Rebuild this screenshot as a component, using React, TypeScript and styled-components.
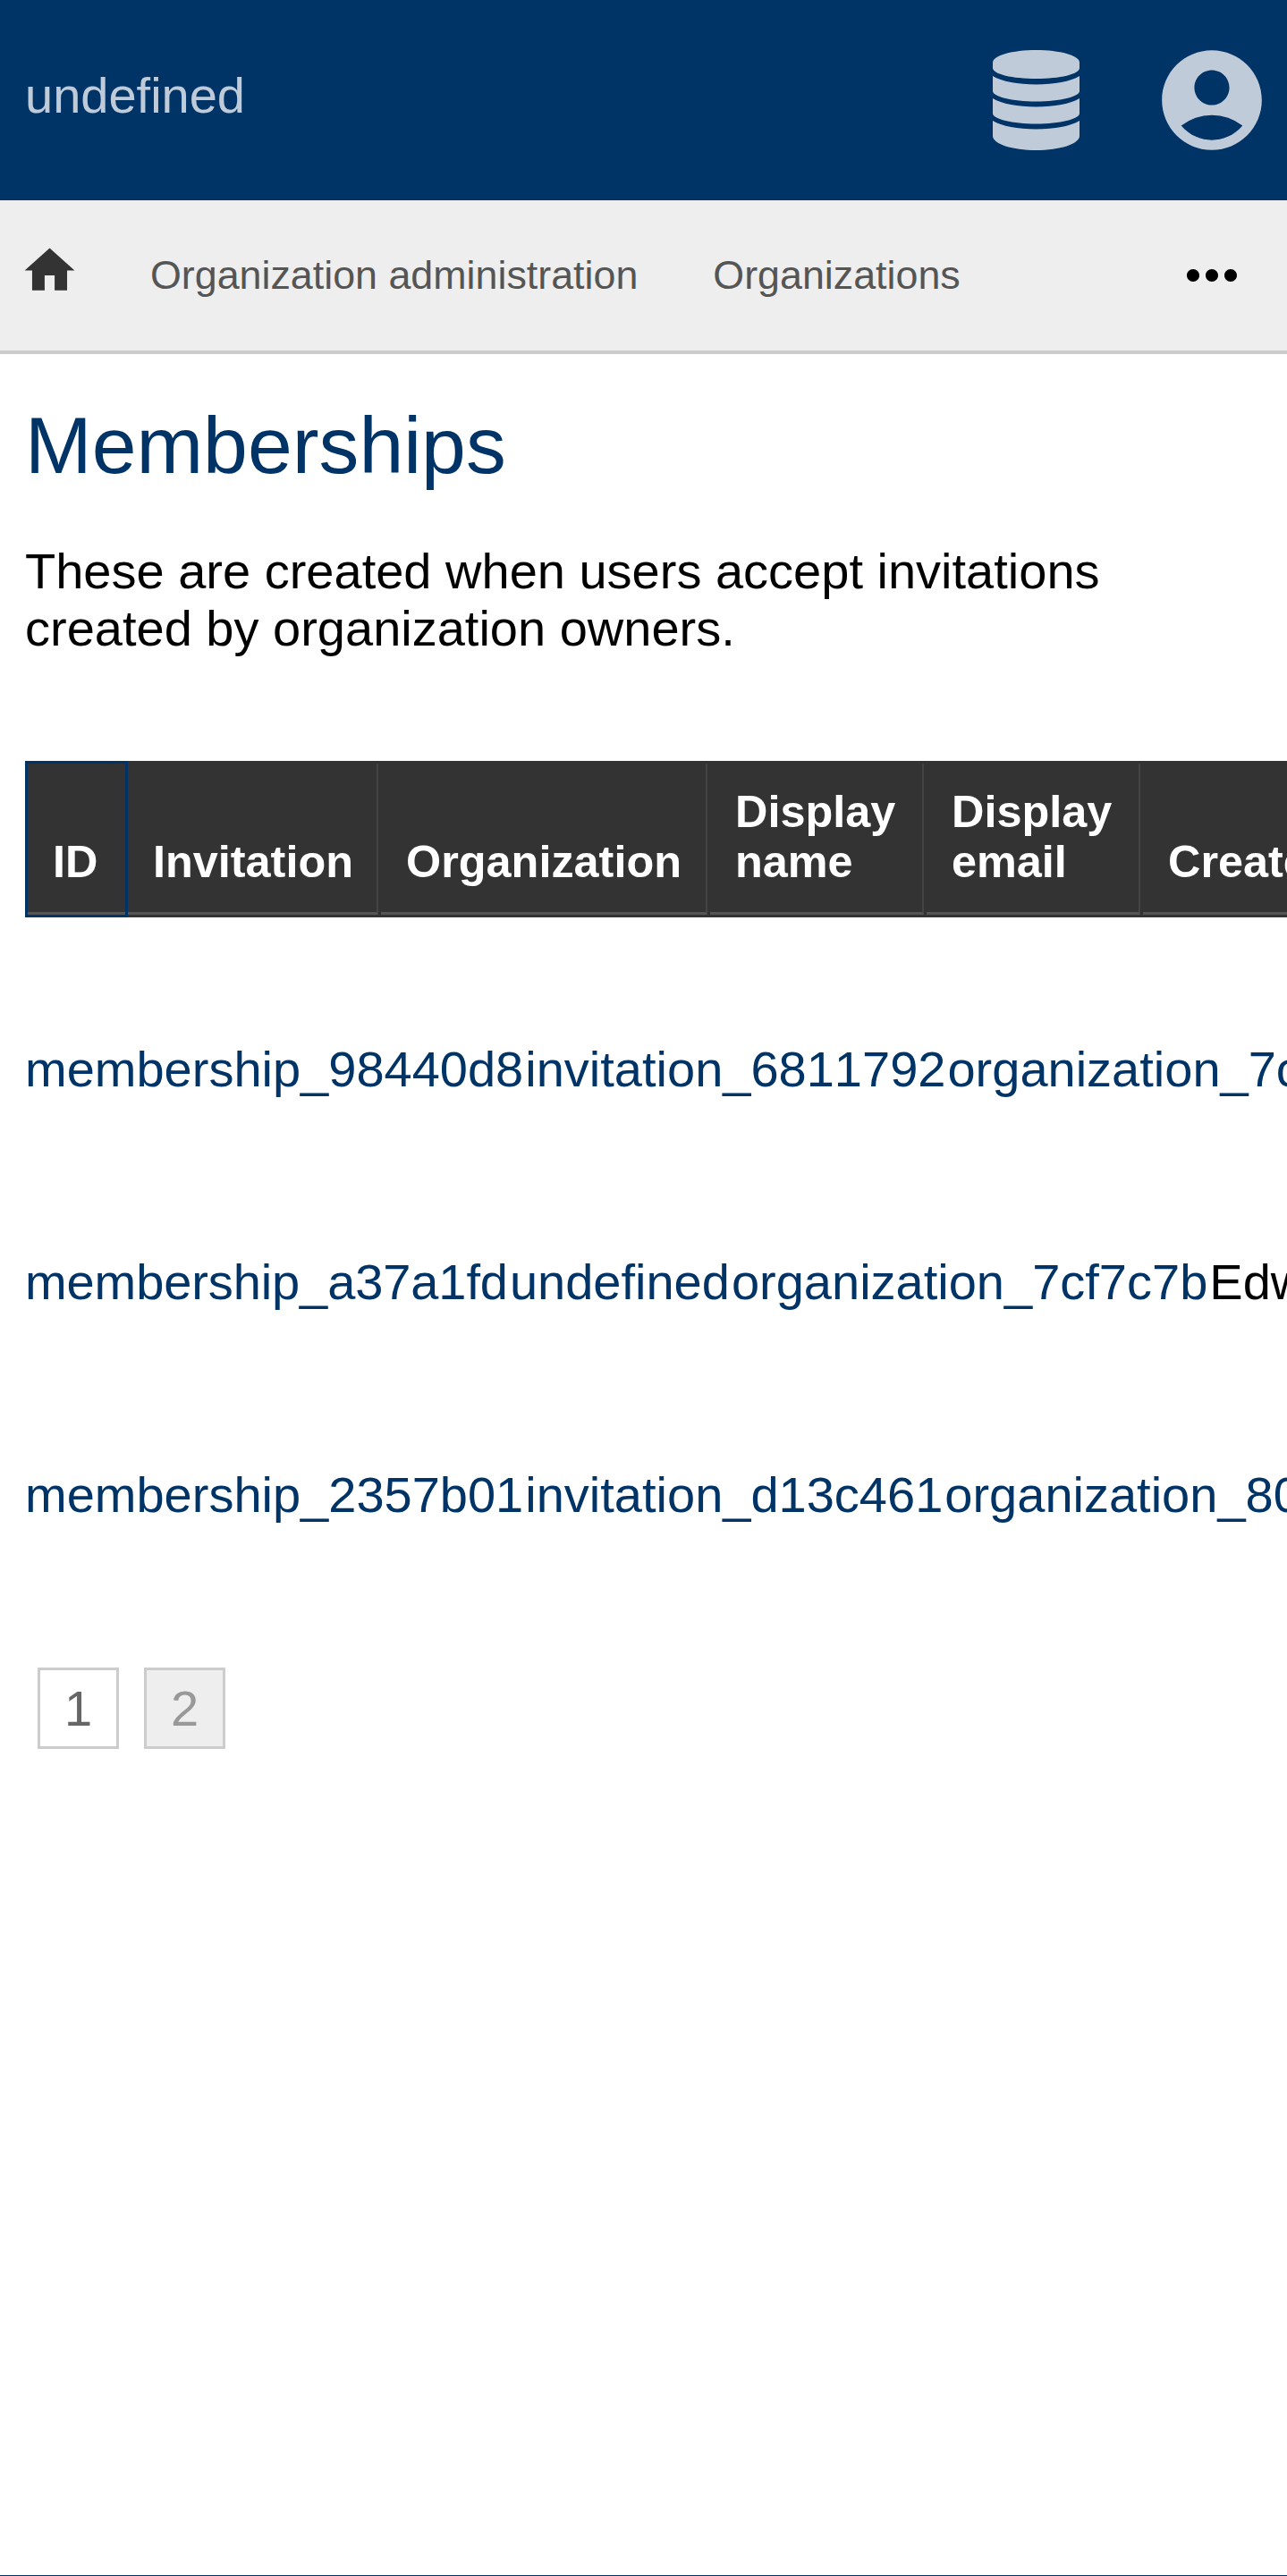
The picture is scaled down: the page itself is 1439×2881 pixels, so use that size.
import React, { FC } from 'react';
import styled, { createGlobalStyle } from 'styled-components';
import { MdAccountCircle, MdHome, MdMoreHoriz } from 'react-icons/md';

const GlobalStyle = createGlobalStyle`
    html, body {
        margin: 0;
        padding: 0;
        background: #fff;
        overflow: hidden;
    }
    body {
        font-family: "Liberation Sans", Arial, sans-serif;
        font-size: 56px;
        line-height: 64px;
        color: #000;
    }
`;

const Page = styled.div`
    width: 1439px;
    height: 2881px;
    display: flex;
    flex-direction: column;
    overflow: hidden;
`;

const Header = styled.header`
    height: 224px;
    flex: none;
    box-sizing: border-box;
    background: #003366;
    color: rgba(255, 255, 255, 0.75);
    display: flex;
    align-items: center;
    justify-content: space-between;
    padding: 0 28px;
`;

const Brand = styled.span`
    font-size: 56px;
    line-height: 64px;
    margin-bottom: 10px;
`;

const HeaderIcons = styled.div`
    display: flex;
    align-items: center;
    gap: 81px;
    margin-right: -11px;
`;

const DatabaseIcon = styled.svg`
    width: 97px;
    height: 112px;
    fill: currentColor;
`;

const Nav = styled.nav`
    height: 172px;
    flex: none;
    box-sizing: border-box;
    background: #eeeeee;
    border-bottom: 4px solid #cccccc;
    display: flex;
    align-items: center;
    padding: 0 42px 0 28px;
`;

const HomeLink = styled.a`
    display: flex;
    color: #333;
    margin: -11px 79px 0 -6px;
`;

const NavLink = styled.a`
    color: #555;
    font-size: 44.8px;
    margin: 0 84px 2px 0;
`;

const More = styled.a`
    display: flex;
    color: #000;
    margin-left: auto;
`;

const Main = styled.main`
    flex: 1;
    min-height: 0;
    padding: 0 0 0 28px;
`;

const Title = styled.h1`
    margin: 52px 0 59px;
    font-size: 89.6px;
    line-height: 100px;
    font-weight: normal;
    color: #003366;
`;

const Intro = styled.p`
    margin: 0 0 116px;
    width: 1260px;
`;

const HeadRow = styled.div`
    display: flex;
    width: max-content;
    gap: 3px;
    padding: 3px;
    background: #333;
    color: #fff;
    font-weight: bold;
    font-size: 50.4px;
    line-height: 56px;
`;

const HeadCell = styled.div<{ $focused?: boolean; $width: number }>`
    box-sizing: border-box;
    width: ${p => p.$width}px;
    height: 169px;
    display: flex;
    align-items: flex-end;
    padding: 0 14px 28px 28px;
    border-bottom: 3px solid #555;
    border-right: ${p => (p.$focused ? 'none' : '2px solid #444')};
    outline: ${p => (p.$focused ? '3px solid #003366' : 'none')};
`;

const Rows = styled.div`
    margin-top: 51px;
`;

const Row = styled.div`
    display: flex;
    width: max-content;
    gap: 2px;
    height: 238px;
    align-items: center;
    font-kerning: none;
`;

const RowLink = styled.a<{ $tight?: boolean }>`
    color: #003366;
    letter-spacing: ${p => (p.$tight ? '-0.1px' : 'normal')};
`;

const Pager = styled.div`
    display: flex;
    gap: 28px;
    margin: 74px 0 0 14px;
`;

const PageButton = styled.a<{ $current?: boolean }>`
    box-sizing: border-box;
    width: 91px;
    height: 91px;
    display: flex;
    align-items: center;
    justify-content: center;
    border: 3px solid #ccc;
    background: ${p => (p.$current ? '#eee' : '#fff')};
    color: ${p => (p.$current ? '#999' : '#666')};
`;

const Footer = styled.div`
    height: 1px;
    flex: none;
    background: #003366;
`;

const memberships = [
    { id: 'membership_98440d8', invitation: 'invitation_6811792', organization: 'organization_7cf7c7b', name: '' },
    { id: 'membership_a37a1fd', invitation: 'undefined', organization: 'organization_7cf7c7b', name: 'Edward', tight: true },
    { id: 'membership_2357b01', invitation: 'invitation_d13c461', organization: 'organization_80a1b2c', name: '' },
];

const columns = [
    { label: 'ID', width: 109 },
    { label: 'Invitation', width: 280 },
    { label: 'Organization', width: 365 },
    { label: 'Display name', width: 239 },
    { label: 'Display email', width: 239 },
    { label: 'Created', width: 300 },
];

const App: FC = () => {
    return (
        <Page>
            <GlobalStyle />
            <Header>
                <Brand>undefined</Brand>
                <HeaderIcons>
                    <DatabaseIcon viewBox="0 0 97 112">
                        <path d="M0 14C0 6 22 0 48.5 0S97 6 97 14V20C97 27 75 32 48.5 32S0 27 0 20Z" />
                        <path d="M0 29C10 35 28 38.5 48.5 38.5S87 35 97 29V46C97 52 75 57.5 48.5 57.5S0 52 0 46Z" />
                        <path d="M0 54C10 60 28 63.5 48.5 63.5S87 60 97 54V71C97 77 75 82.5 48.5 82.5S0 77 0 71Z" />
                        <path d="M0 79C10 85 28 88.5 48.5 88.5S87 85 97 79V96C97 105 75 112 48.5 112S0 105 0 96Z" />
                    </DatabaseIcon>
                    <MdAccountCircle size={134} />
                </HeaderIcons>
            </Header>
            <Nav>
                <HomeLink><MdHome size={67} /></HomeLink>
                <NavLink>Organization administration</NavLink>
                <NavLink>Organizations</NavLink>
                <More><MdMoreHoriz size={84} /></More>
            </Nav>
            <Main>
                <Title>Memberships</Title>
                <Intro>These are created when users accept invitations created by organization owners.</Intro>
                <HeadRow>
                    {columns.map((c, i) => (
                        <HeadCell key={c.label} $width={c.width} $focused={i === 0}>{c.label}</HeadCell>
                    ))}
                </HeadRow>
                <Rows>
                    {memberships.map(m => (
                        <Row key={m.id}>
                            <RowLink $tight={m.tight}>{m.id}</RowLink>
                            <RowLink>{m.invitation}</RowLink>
                            <RowLink>{m.organization}</RowLink>
                            <span>{m.name}</span>
                        </Row>
                    ))}
                </Rows>
                <Pager>
                    <PageButton>1</PageButton>
                    <PageButton $current>2</PageButton>
                </Pager>
            </Main>
            <Footer />
        </Page>
    )
}

export default App
